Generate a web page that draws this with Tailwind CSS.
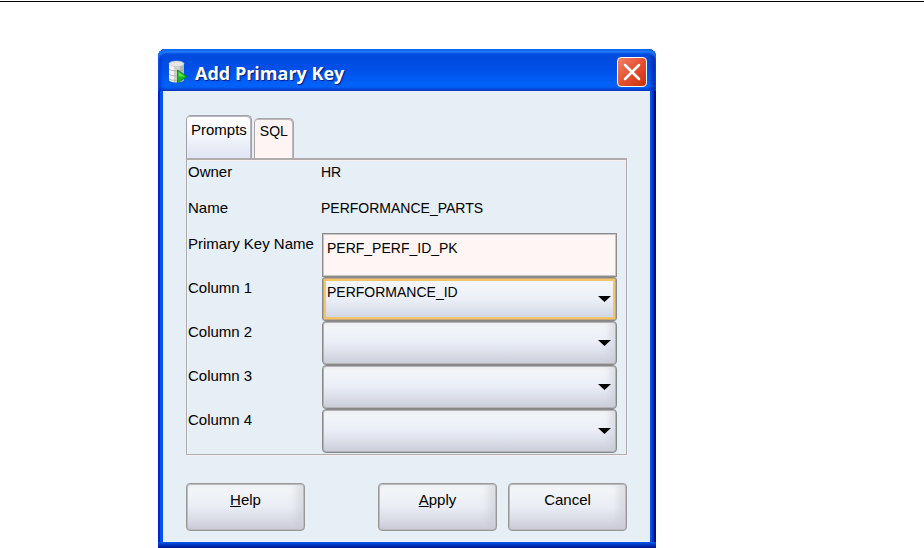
<!DOCTYPE html>
<html lang="en">
<head>
    <meta charset="UTF-8">
    <meta name="viewport" content="width=device-width, initial-scale=1.0">
    <title>Add Primary Key</title>
    <script src="https://cdn.jsdelivr.net/npm/@tailwindcss/browser@4"></script>
</head>
<body class="bg-white text-black font-['Liberation_Sans',Arial,sans-serif] text-[15px]">
    <hr class="mt-px border-t border-black">

    <main class="mt-[47px] ml-[158px] w-full max-w-[498px]">
        <form class="rounded-t-lg bg-[#0054ec] shadow-[inset_2px_0_#0020d0,inset_-2px_0_#00108c,inset_-4px_0_#0030cc]">
            <!-- Title bar -->
            <header class="flex h-[42px] items-center gap-[6px] rounded-t-lg border-b border-[#0038c0] bg-linear-to-b from-[#0048d8] via-[#0050e8] to-[#0068ff] pt-[4px] pr-[9px] pl-[10px] shadow-[inset_0_2px_1px_#1068f0,inset_0_4px_2px_#2080ff,inset_-4px_0_4px_#0028b0,inset_3px_0_3px_#0038d8]">
                <svg class="h-[24px] w-[21px]" viewBox="0 0 21 24" aria-hidden="true">
                    <path d="M1 3.500v16c0 4 15 4 15 0v-16z" fill="#d0d0d0"/>
                    <path d="M1 3.500v16c0 1.500 2 2.500 5 2.800V3.500z" fill="#f6f6f6"/>
                    <path d="M12 4h4v15.500c0 1-2 2-4 2.500z" fill="#b4b4b4"/>
                    <path d="M1 9c1 2.500 14 2.500 15 0M1 14c1 2.500 14 2.500 15 0M1 18.500c1 2.500 14 2.500 15 0" fill="none" stroke="#a8a8a8" stroke-width=".8"/>
                    <ellipse cx="8.500" cy="3.800" rx="7.500" ry="2.800" fill="#e6e6e6" stroke="#c0c0c0" stroke-width=".6"/>
                    <path d="M9.500 10v13l9.500-6.500z" fill="#18b818" stroke="#0c7c20" stroke-width=".8"/>
                    <path d="M10.500 12v4.500h6.500z" fill="#60e050"/>
                </svg>
                <h1 class="grow pt-[2px] font-['Open_Sans','Noto_Sans',sans-serif] text-[18px] leading-6 font-bold text-white [text-shadow:1px_1px_1px_#001880]">Add Primary Key</h1>
                <button type="button" aria-label="Close" class="flex size-[30px] items-center justify-center rounded-[4px] border border-white bg-linear-to-br from-[#f08068] via-[#e45030] to-[#cc3000]">
                    <svg class="size-[18px]" viewBox="0 0 18 18" fill="none" stroke="#fff" stroke-width="2.500" stroke-linecap="round" aria-hidden="true">
                        <path d="M2 2l14 14M16 2L2 16"/>
                    </svg>
                </button>
            </header>

            <div class="mr-[6px] ml-[5px] bg-[#e6eef6] px-[23px] pt-[24px] pb-[11px]">
                <!-- Tabs -->
                <div class="flex items-end gap-[2px]" role="tablist">
                    <button type="button" role="tab" aria-selected="true" class="h-[43px] rounded-t-[5px] border border-b-0 border-[#a0a0a8] bg-linear-to-b from-white via-[#f2f5fb] to-[#e0e4f4] px-[4px] pb-[15px] leading-5 shadow-[inset_-1px_1px_#b4b4bc]">Prompts</button>
                    <button type="button" role="tab" aria-selected="false" class="h-[40px] rounded-t-[5px] border border-b-0 border-[#a8a4a8] bg-[#fff4f4] px-[5px] pb-[15px] text-[14px] leading-5 shadow-[inset_-1px_1px_#c0b8bc]">SQL</button>
                </div>

                <div role="tabpanel" class="border border-t-2 border-[#b0acac] pt-px pr-[9px] pb-px shadow-[1px_1px_#f8f0f0,inset_1px_1px_#f8f0f0]">
                    <dl class="grid grid-cols-[133px_1fr] auto-rows-[36px] pl-px leading-[22px]">
                        <dt>Owner</dt>
                        <dd class="text-[14px]">HR</dd>
                        <dt>Name</dt>
                        <dd class="text-[14px]">PERFORMANCE_PARTS</dd>
                    </dl>
                    <div class="grid grid-cols-[134px_1fr] auto-rows-[44px] pl-px leading-[22px]">
                        <label for="pk-name">Primary Key Name</label>
                        <input id="pk-name" type="text" value="PERF_PERF_ID_PK" class="w-full rounded-none border border-[#8c8c8c] bg-[#fff5f5] px-[4px] pb-[14px] text-[14px] shadow-[inset_0_0_0_1px_#c8c4c4]">

                        <label for="column-1">Column 1</label>
                        <div class="relative">
                            <select id="column-1" class="h-full w-full appearance-none rounded-[3px] border border-[#888] bg-linear-to-b from-[#f6f8fa] via-[#eceff8] to-[#ccd4e2] px-[4px] pb-[14px] text-[14px] shadow-[inset_0_0_0_1px_#c8a878,inset_0_0_0_3px_#f4c468] outline-none">
                                <option>PERFORMANCE_ID</option>
                            </select>
                            <svg class="pointer-events-none absolute top-[19px] right-[6px] h-[6px] w-[13px]" viewBox="0 0 13 6" aria-hidden="true"><path d="M0 0h13L6.500 6z"/></svg>
                        </div>

                        <label for="column-2">Column 2</label>
                        <div class="relative">
                            <select id="column-2" class="h-full w-full appearance-none rounded-[4px] border border-[#888] bg-linear-to-b from-[#f6f8f8] via-[#e9edf7] to-[#cccfdb] px-[4px] pb-[14px] text-[14px] shadow-[inset_0_0_0_1px_#b4b4b8,inset_-6px_0_6px_#c8cad480]">
                                <option></option>
                            </select>
                            <svg class="pointer-events-none absolute top-[19px] right-[6px] h-[6px] w-[13px]" viewBox="0 0 13 6" aria-hidden="true"><path d="M0 0h13L6.500 6z"/></svg>
                        </div>

                        <label for="column-3">Column 3</label>
                        <div class="relative">
                            <select id="column-3" class="h-full w-full appearance-none rounded-[4px] border border-[#888] bg-linear-to-b from-[#f6f8f8] via-[#e9edf7] to-[#cccfdb] px-[4px] pb-[14px] text-[14px] shadow-[inset_0_0_0_1px_#b4b4b8,inset_-6px_0_6px_#c8cad480]">
                                <option></option>
                            </select>
                            <svg class="pointer-events-none absolute top-[19px] right-[6px] h-[6px] w-[13px]" viewBox="0 0 13 6" aria-hidden="true"><path d="M0 0h13L6.500 6z"/></svg>
                        </div>

                        <label for="column-4">Column 4</label>
                        <div class="relative">
                            <select id="column-4" class="h-full w-full appearance-none rounded-[4px] border border-[#888] bg-linear-to-b from-[#f6f8f8] via-[#e9edf7] to-[#cccfdb] px-[4px] pb-[14px] text-[14px] shadow-[inset_0_0_0_1px_#b4b4b8,inset_-6px_0_6px_#c8cad480]">
                                <option></option>
                            </select>
                            <svg class="pointer-events-none absolute top-[19px] right-[6px] h-[6px] w-[13px]" viewBox="0 0 13 6" aria-hidden="true"><path d="M0 0h13L6.500 6z"/></svg>
                        </div>
                    </div>
                </div>

                <!-- Actions -->
                <div class="mt-[28px] flex gap-[11px]">
                    <button type="button" class="mr-auto h-[48px] w-[119px] rounded-[4px] border border-[#989898] bg-linear-to-b from-[#f6f8f8] via-[#e9edf5] to-[#ccccd8] pb-[14px] shadow-[inset_0_0_0_1px_#bcbcc0,inset_-8px_0_6px_#c8cad480]"><u>H</u>elp</button>
                    <button type="submit" class="h-[48px] w-[119px] rounded-[4px] border border-[#989898] bg-linear-to-b from-[#f6f8f8] via-[#e9edf5] to-[#ccccd8] pb-[14px] shadow-[inset_0_0_0_1px_#bcbcc0,inset_-8px_0_6px_#c8cad480]"><u>A</u>pply</button>
                    <button type="button" class="h-[48px] w-[119px] rounded-[4px] border border-[#989898] bg-linear-to-b from-[#f6f8f8] via-[#e9edf5] to-[#ccccd8] pb-[14px] shadow-[inset_0_0_0_1px_#bcbcc0,inset_-8px_0_6px_#c8cad480]">Cancel</button>
                </div>
            </div>
            <div class="h-[6px] bg-linear-to-b from-[#0058f0] to-[#00108c]"></div>
        </form>
    </main>
</body>
</html>
